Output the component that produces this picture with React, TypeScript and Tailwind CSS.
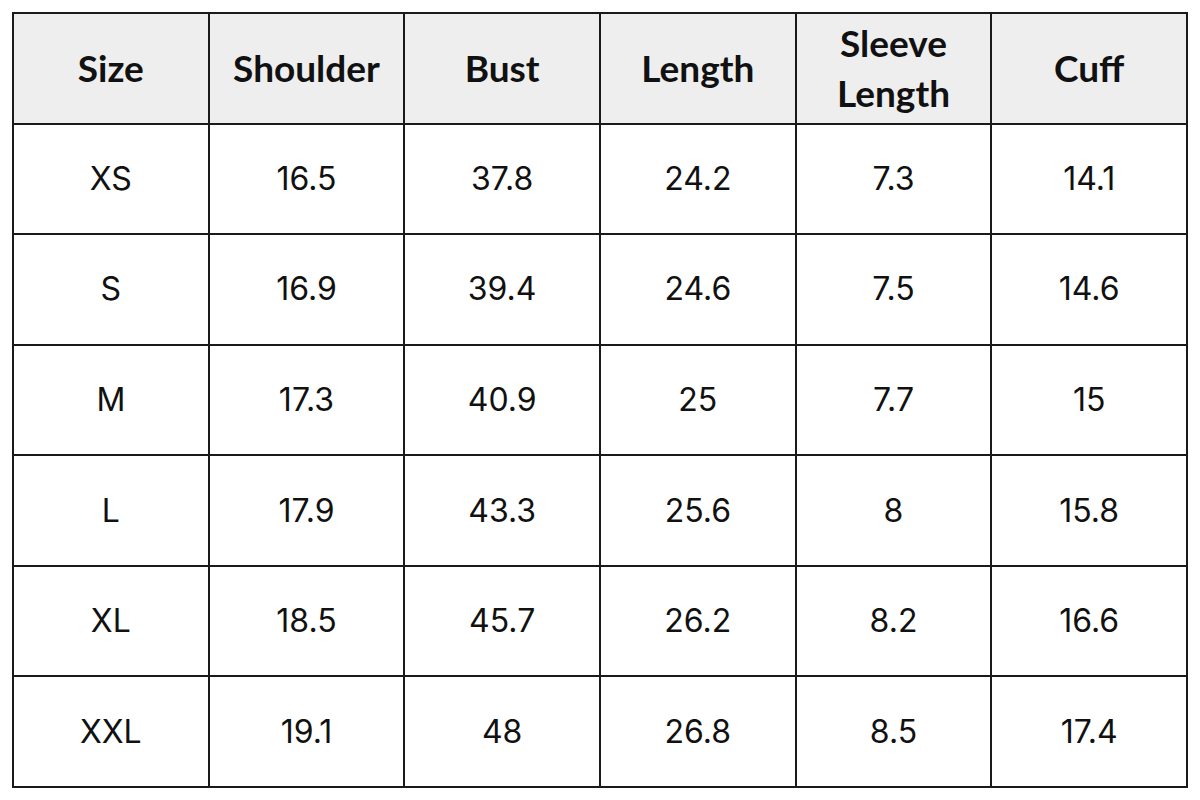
const headers = ["Size", "Shoulder", "Bust", "Length", "Sleeve Length", "Cuff"];

const rows: string[][] = [
  ["XS", "16.5", "37.8", "24.2", "7.3", "14.1"],
  ["S", "16.9", "39.4", "24.6", "7.5", "14.6"],
  ["M", "17.3", "40.9", "25", "7.7", "15"],
  ["L", "17.9", "43.3", "25.6", "8", "15.8"],
  ["XL", "18.5", "45.7", "26.2", "8.2", "16.6"],
  ["XXL", "19.1", "48", "26.8", "8.5", "17.4"],
];

export default function App() {
  return (
    <div className="w-[1200px] h-[800px] bg-white p-[12px]">
      <div className="grid grid-cols-6 grid-rows-7 gap-[2px] bg-[#1a1a1a] p-[2px] w-[1176px] h-[776px]">
        {headers.map((h) => (
          <div
            key={h}
            className="bg-[#eeeeee] flex items-center justify-center text-center px-4 text-[37px] leading-[50px] font-bold text-[#111]"
            style={{ fontFamily: "Lato, 'Open Sans', sans-serif" }}
          >
            {h === "Sleeve Length" ? (
              <span>
                Sleeve
                <br />
                Length
              </span>
            ) : (
              h
            )}
          </div>
        ))}
        {rows.map((r) =>
          r.map((v, i) => (
            <div
              key={r[0] + i}
              className="bg-white flex items-center justify-center text-[32px] text-[#111]"
              style={{ fontFamily: "Inter, 'Liberation Sans', sans-serif" }}
            >
              {v}
            </div>
          ))
        )}
      </div>
    </div>
  );
}
